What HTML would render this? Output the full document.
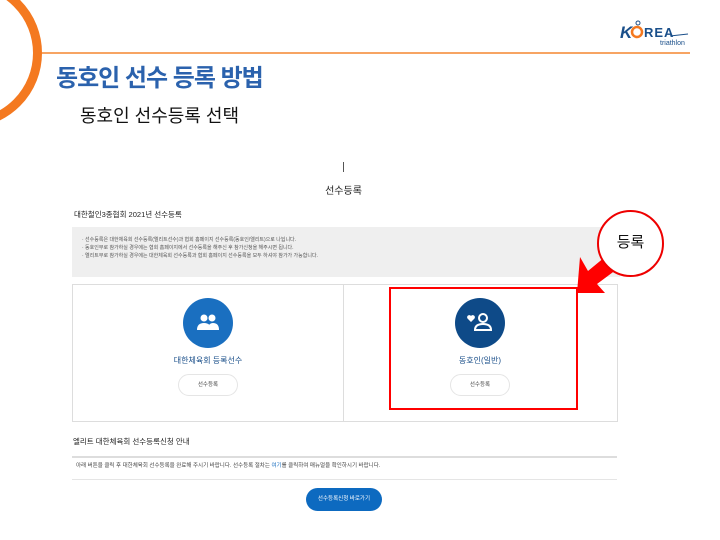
<!DOCTYPE html>
<html><head><meta charset="utf-8"><style>
body{margin:0;width:720px;height:540px;background:#fff;position:relative;overflow:hidden;font-family:"Liberation Sans","Noto Sans CJK KR",sans-serif;}
.a{position:absolute;}
.t{font-size:7px;color:#444;white-space:nowrap;}
</style></head><body>
<div class="a" style="left:-108px;top:-22px;width:150px;height:150px;border:9px solid #f47920;border-radius:50%;box-sizing:border-box;"></div>
<div class="a" style="left:42px;top:52px;width:648px;height:2px;background:#f7a463;"></div>
<div class="a" style="left:618px;top:18px;width:74px;height:30px;">
<svg width="74" height="30" viewBox="0 0 74 30"><text x="2" y="20" font-family="Liberation Sans" font-weight="bold" font-style="italic" font-size="17" fill="#1a4f8a">K</text><circle cx="19" cy="14" r="5" fill="none" stroke="#f47920" stroke-width="2.5"/><circle cx="20" cy="5" r="2" fill="none" stroke="#1a4f8a" stroke-width="1"/><text x="26" y="19" font-family="Liberation Sans" font-weight="bold" font-size="13" fill="#1a4f8a" letter-spacing="1">REA</text><path d="M52 18 L70 16" stroke="#1a4f8a" stroke-width="1"/><text x="42" y="27" font-family="Liberation Sans" font-size="7" fill="#1a4f8a">triathlon</text></svg></div>
<div class="a" style="left:56px;top:58px;font-size:24px;font-weight:bold;color:#2b62ad;letter-spacing:-1px;">동호인 선수 등록 방법</div>
<div class="a" style="left:80px;top:102px;font-size:18px;color:#111;">동호인 선수등록 선택</div>
<div class="a" style="left:343px;top:162px;width:1px;height:10px;background:#555;"></div>
<div class="a" style="left:0;width:687px;top:182px;text-align:center;font-size:10px;color:#222;">선수등록</div>
<div class="a t" style="left:74px;top:209px;font-size:7.5px;color:#222;">대한철인3종협회 2021년 선수등록</div>
<div class="a" style="left:72px;top:227px;width:548px;height:50px;background:#efefef;"></div>
<div class="a t" style="left:82px;top:236px;font-size:5px;line-height:8px;color:#555;">· 선수등록은 대한체육회 선수등록(엘리트선수)과 협회 홈페이지 선수등록(동호인/엘리트)으로 나뉩니다.<br>· 동호인부로 참가하실 경우에는 협회 홈페이지에서 선수등록을 해주신 후 참가신청을 해주시면 됩니다.<br>· 엘리트부로 참가하실 경우에는 대한체육회 선수등록과 협회 홈페이지 선수등록을 모두 하셔야 참가가 가능합니다.</div>
<div class="a" style="left:72px;top:284px;width:544px;height:136px;border:1px solid #ddd;"></div>
<div class="a" style="left:343px;top:285px;width:1px;height:136px;background:#ddd;"></div>
<div class="a" style="left:183px;top:298px;width:50px;height:50px;border-radius:50%;background:#1a6fc0;"></div>
<svg class="a" style="left:196px;top:313px" width="24" height="20" viewBox="0 0 24 20"><circle cx="8" cy="5" r="3.5" fill="#fff"/><circle cx="16" cy="5" r="3.5" fill="#fff"/><path d="M1 17 Q1 10 8 10 Q15 10 15 17Z" fill="#fff"/><path d="M12 17 Q12 10 17 10 Q23 10 23 17Z" fill="#fff"/></svg>
<div class="a" style="left:108px;width:200px;top:355px;text-align:center;font-size:8px;color:#1a4f8a;">대한체육회 등록선수</div>
<div class="a t" style="left:178px;top:374px;width:60px;height:22px;border:1px solid #e5e5e5;border-radius:11px;box-sizing:border-box;text-align:center;line-height:20px;font-size:5.5px;">선수등록</div>
<div class="a" style="left:455px;top:298px;width:50px;height:50px;border-radius:50%;background:#0e4a88;"></div>
<svg class="a" style="left:466px;top:312px" width="28" height="22" viewBox="0 0 28 22"><path d="M5 10 L1.5 6.5 A2 2 0 0 1 5 4 A2 2 0 0 1 8.5 6.5Z" fill="#fff"/><circle cx="17" cy="6" r="4" fill="none" stroke="#fff" stroke-width="2"/><path d="M9 18 Q9 12 17 12 Q25 12 25 18Z" fill="none" stroke="#fff" stroke-width="2"/></svg>
<div class="a" style="left:380px;width:200px;top:355px;text-align:center;font-size:8px;color:#1a4f8a;">동호인(일반)</div>
<div class="a t" style="left:450px;top:374px;width:60px;height:22px;border:1px solid #e5e5e5;border-radius:11px;box-sizing:border-box;text-align:center;line-height:20px;font-size:5.5px;">선수등록</div>
<div class="a" style="left:389px;top:287px;width:189px;height:123px;border:2px solid #f00;box-sizing:border-box;"></div>
<svg class="a" style="left:0;top:0" width="720" height="540"><path d="M577 293 L605 293 L597 284 L640 252 L628 238 L588 271 L580 257 Z" fill="#f00"/></svg>
<div class="a" style="left:597px;top:210px;width:67px;height:67px;border:2px solid #e00;border-radius:50%;background:#fff;box-sizing:border-box;text-align:center;line-height:62px;font-size:15px;color:#111;">등록</div>
<div class="a t" style="left:73px;top:436px;font-size:7.5px;color:#222;">엘리트 대한체육회 선수등록신청 안내</div>
<div class="a" style="left:72px;top:456px;width:545px;height:2px;background:#ddd;"></div>
<div class="a t" style="left:76px;top:461px;font-size:5.5px;color:#444;">아래 버튼을 클릭 후 대한체육회 선수등록을 완료해 주시기 바랍니다. 선수등록 절차는 <span style="color:#1a6fc0">여기</span>를 클릭하여 매뉴얼을 확인하시기 바랍니다.</div>
<div class="a" style="left:72px;top:479px;width:545px;height:1px;background:#e5e5e5;"></div>
<div class="a" style="left:306px;top:488px;width:76px;height:23px;border-radius:12px;background:#0d6ac0;color:#fff;font-size:5.5px;text-align:center;line-height:23px;">선수등록신청 바로가기</div>
</body></html>
